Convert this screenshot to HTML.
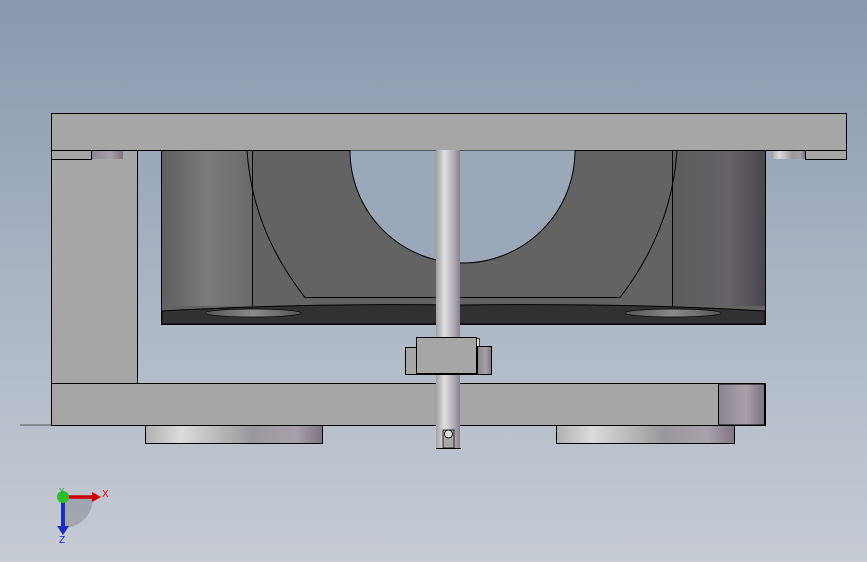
<!DOCTYPE html>
<html><head><style>
html,body{margin:0;padding:0;width:867px;height:562px;overflow:hidden}
body{background:linear-gradient(#8898ae,#a9b4c4 50%,#c7ccd5)}
svg{position:absolute;left:0;top:0}
</style></head><body>
<svg width="867" height="562" viewBox="0 0 867 562" xmlns="http://www.w3.org/2000/svg">
<defs>
<linearGradient id="lc" x1="0" x2="1"><stop offset="0" stop-color="#5e5e60"/><stop offset=".5" stop-color="#7b7b7b"/><stop offset="1" stop-color="#6a6a6a"/></linearGradient>
<linearGradient id="rc" x1="0" x2="1"><stop offset="0" stop-color="#5c5c5c"/><stop offset=".6" stop-color="#666268"/><stop offset="1" stop-color="#4a464d"/></linearGradient>
<linearGradient id="rod" x1="0" x2="1"><stop offset="0" stop-color="#a0a0a4"/><stop offset=".35" stop-color="#e0e0e0"/><stop offset=".75" stop-color="#b0acb4"/><stop offset="1" stop-color="#8a8090"/></linearGradient>
<linearGradient id="foot" x1="0" x2="1"><stop offset="0" stop-color="#b0b0b0"/><stop offset=".2" stop-color="#dcdcdc"/><stop offset=".6" stop-color="#9a989c"/><stop offset=".85" stop-color="#a8a0aa"/><stop offset="1" stop-color="#7e7482"/></linearGradient>
<linearGradient id="pur" x1="0" x2="1"><stop offset="0" stop-color="#8a8590"/><stop offset=".6" stop-color="#aaa0aa"/><stop offset="1" stop-color="#7c7282"/></linearGradient>
<linearGradient id="hole" x1="0" x2="1"><stop offset="0" stop-color="#555"/><stop offset=".5" stop-color="#8a8a8a"/><stop offset="1" stop-color="#555"/></linearGradient>
</defs>
<line x1="20" y1="425" x2="51" y2="425" stroke="#555" stroke-width="1"/>
<!-- left column -->
<rect x="51.5" y="150.5" width="86" height="233" fill="#a6a6a6" stroke="#000"/>
<!-- top plate -->
<rect x="51.5" y="113.5" width="795" height="37" fill="#a6a6a6" stroke="#000"/>
<rect x="51.5" y="150.5" width="40" height="9" fill="#a6a6a6" stroke="#000"/>
<rect x="92" y="151" width="31" height="8" fill="url(#pur)"/>
<rect x="773" y="151" width="32" height="8" fill="url(#foot)"/>
<rect x="805.5" y="150.5" width="41" height="9" fill="#a6a6a6" stroke="#000"/>
<!-- block -->
<rect x="161.5" y="150.5" width="604" height="174" fill="#636363" stroke="#000"/>
<rect x="162" y="151" width="90" height="155" fill="url(#lc)"/>
<rect x="673" y="151" width="92" height="155" fill="url(#rc)"/>
<path d="M350 150.5 A112 112 0 0 0 575 150.5 Z" fill="#9aa8ba"/>
<path d="M350 150.5 A112 112 0 0 0 575 150.5" fill="none" stroke="#000"/>
<line x1="252.5" y1="150" x2="252.5" y2="306" stroke="#000"/>
<line x1="672.5" y1="150" x2="672.5" y2="306" stroke="#000"/>
<path d="M247 150 Q252 230 305 297.5 L620 297.5 Q672 230 677 150" fill="none" stroke="#000"/>
<path d="M162 311 Q300 303 463 305 Q630 303 765 311 L765 324 L162 324 Z" fill="#333033" stroke="#000"/>
<ellipse cx="253" cy="313" rx="48" ry="4" fill="url(#hole)" stroke="#000" stroke-width=".7"/>
<ellipse cx="673" cy="313" rx="48" ry="4" fill="url(#hole)" stroke="#000" stroke-width=".7"/>
<!-- bottom plate -->
<rect x="51.5" y="383.5" width="714" height="42" fill="#a6a6a6" stroke="#000"/>
<rect x="718.5" y="384" width="46" height="41" fill="url(#pur)" stroke="#000"/>
<rect x="145.5" y="425.5" width="177" height="18" fill="url(#foot)" stroke="#000"/>
<rect x="556.5" y="425.5" width="178" height="18" fill="url(#foot)" stroke="#000"/>
<!-- rod -->
<rect x="436" y="150" width="24" height="298" fill="url(#rod)"/>
<rect x="443" y="430" width="11" height="18" fill="#a8a8a8" stroke="#000" stroke-width=".8"/>
<circle cx="448.5" cy="434" r="4" fill="#ddd" stroke="#000" stroke-width=".8"/>
<line x1="436" y1="448.5" x2="461" y2="448.5" stroke="#000"/>
<!-- collar -->
<rect x="405.5" y="347.5" width="72" height="27" fill="#a6a6a6" stroke="#000"/>
<rect x="477.5" y="346.5" width="14" height="28" fill="url(#pur)" stroke="#000"/>
<rect x="416.5" y="337.5" width="60" height="36" fill="#a6a6a6" stroke="#000"/>
<rect x="476.5" y="338.5" width="3" height="8" fill="#ddd" stroke="#000" stroke-width=".7"/>
<!-- triad -->
<path d="M62 497 L62 528 A30 30 0 0 0 93 497 Z" fill="#8a8f98" opacity=".6"/>
<line x1="63" y1="497" x2="94" y2="497" stroke="#c00" stroke-width="3.5"/>
<path d="M92 492 L101 497 L92 502 Z" fill="#c00"/>
<text x="102" y="497" font-family="Liberation Sans,sans-serif" font-size="10" fill="#e00">X</text>
<line x1="63" y1="497" x2="63" y2="528" stroke="#1a2fbf" stroke-width="4"/>
<path d="M57 526 L63 535 L69 526 Z" fill="#1a2fbf"/>
<text x="59" y="543" font-family="Liberation Sans,sans-serif" font-size="10" fill="#0026e0">Z</text>
<circle cx="63" cy="497" r="6" fill="#2bc02b"/>
<text x="59" y="494" font-family="Liberation Sans,sans-serif" font-size="8" fill="#1a1">Y</text>
</svg>
</body></html>
